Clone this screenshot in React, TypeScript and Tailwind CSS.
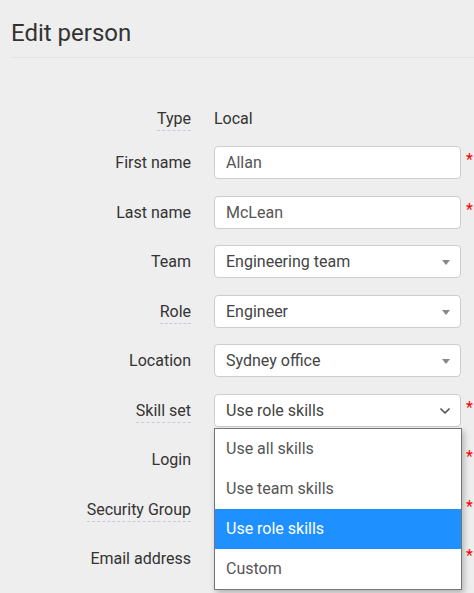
import { ChevronDown } from 'lucide-react';

type Row = {
  label: string;
  kind: 'text' | 'input' | 'select' | 'native' | 'empty';
  value?: string;
  dotted?: boolean;
  required?: boolean;
};

const rows: Row[] = [
  { label: 'First name', kind: 'input', value: 'Allan', required: true },
  { label: 'Last name', kind: 'input', value: 'McLean', required: true },
  { label: 'Team', kind: 'select', value: 'Engineering team' },
  { label: 'Role', kind: 'select', value: 'Engineer', dotted: true },
  { label: 'Location', kind: 'select', value: 'Sydney office' },
  { label: 'Skill set', kind: 'native', value: 'Use role skills', dotted: true, required: true },
  { label: 'Login', kind: 'empty', required: true },
  { label: 'Security Group', kind: 'empty', dotted: true, required: true },
  { label: 'Email address', kind: 'empty', required: true },
];

const options = ['Use all skills', 'Use team skills', 'Use role skills', 'Custom'];

function Label({ text, dotted }: { text: string; dotted?: boolean }) {
  return (
    <div className="w-[191px] shrink-0 text-right">
      <span className={dotted ? 'border-b border-dashed border-[#c9c9dc] pb-[2px]' : ''}>{text}</span>
    </div>
  );
}

function Field({ row }: { row: Row }) {
  if (row.kind === 'input') {
    return (
      <div className="w-[247px] h-[33px] rounded-[4px] border border-[#cccccc] bg-white flex items-center px-[11px] text-[#555555]">
        {row.value}
      </div>
    );
  }
  if (row.kind === 'select') {
    return (
      <div className="w-[247px] h-[33px] rounded-[4px] border border-[#cccccc] bg-white flex items-center justify-between pl-[11px] pr-[10px] text-[#444444]">
        <span>{row.value}</span>
        <svg width="8" height="5" viewBox="0 0 8 5" className="mt-[2px]">
          <path d="M0 0 L8 0 L4 5 Z" fill="#888888" />
        </svg>
      </div>
    );
  }
  if (row.kind === 'native') {
    return (
      <div className="relative">
        <div className="w-[247px] h-[33px] rounded-[4px] border border-[#cccccc] bg-white flex items-center justify-between pl-[11px] pr-[7px] text-[#444444]">
          <span>{row.value}</span>
          <ChevronDown size={16} strokeWidth={2.6} className="text-[#555555]" />
        </div>
        <div className="absolute left-0 top-[34px] w-[248px] bg-white border border-[#767676] shadow-[2px_3px_6px_rgba(0,0,0,0.25)] z-10">
          {options.map((o) => (
            <div
              key={o}
              className={`h-[40px] flex items-center pl-[11px] ${
                o === 'Use role skills' ? 'bg-[#1e90ff] text-white' : 'text-[#555555]'
              }`}
            >
              {o}
            </div>
          ))}
        </div>
      </div>
    );
  }
  return <div className="w-[247px] h-[33px]" />;
}

export default function App() {
  return (
    <div className="h-[593px] bg-[#eeeeee] text-[#333333] text-[16px] font-['Roboto',sans-serif] overflow-hidden">
      <div className="pl-[11px] pt-[18px]">
        <h1 className="text-[24px] leading-[30px] pb-[9px] border-b border-[#e3e3e3]">Edit person</h1>
      </div>

      <div className="pt-[44px] flex flex-col">
        <div className="flex items-center h-[33px] mb-[11px]">
          <Label text="Type" dotted />
          <div className="ml-[23px]">Local</div>
        </div>

        {rows.map((row, i) => (
          <div key={row.label} className={`flex items-center h-[33px] ${i % 2 === 0 ? 'mb-[17px]' : 'mb-[16px]'}`}>
            <Label text={row.label} dotted={row.dotted} />
            <div className="ml-[23px]">
              <Field row={row} />
            </div>
            {row.required && <span className="ml-[5px] -mt-[6px] text-[#ff0000]">*</span>}
          </div>
        ))}

        <div className="pl-[214px] -mt-[3px] text-[#333333] whitespace-nowrap">
          <b>Note:</b> The email address is the login name.
        </div>
      </div>
    </div>
  );
}
